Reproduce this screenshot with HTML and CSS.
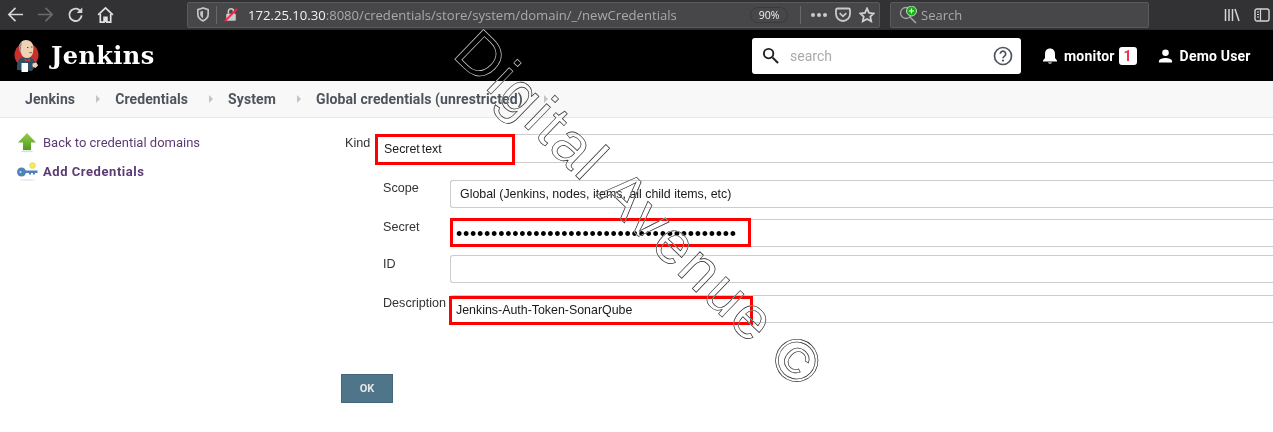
FILE: index.html
```html
<!DOCTYPE html>
<html>

<head>
    <title>Jenkins</title>
    <link rel="stylesheet" href="styles.css">
</head>

<body>
    <!-- browser toolbar -->
    <div class="toolbar">
        <div class="nav-icons">
            <svg class="tb-icon" viewBox="0 0 18 18"><path d="M17 9H2M9 2 2 9l7 7" fill="none" stroke="#d4d4d4" stroke-width="1.800"/></svg>
            <svg class="tb-icon" viewBox="0 0 18 18"><path d="M1 9h15M9 2l7 7-7 7" fill="none" stroke="#6b6b6e" stroke-width="1.800"/></svg>
            <svg class="tb-icon" viewBox="0 0 18 18"><path d="M15.500 10A6.500 6.500 0 1 1 13 4.200L15 6" fill="none" stroke="#d4d4d4" stroke-width="2"/><path d="M16.200 1.500v6h-6z" fill="#d4d4d4"/></svg>
            <svg class="tb-icon" viewBox="0 0 18 18"><path d="M1.200 9.500 9 2l7.800 7.500" fill="none" stroke="#e2e2e2" stroke-width="1.800"/><path d="M3.500 8.500V17h4v-5h3v5h4V8.500" fill="none" stroke="#e2e2e2" stroke-width="1.800"/><rect x="7.500" y="12" width="3" height="5" fill="#e2e2e2"/></svg>
        </div>
        <div class="urlbar">
            <svg class="shield" viewBox="0 0 14 16"><path d="M7 1 1.500 2.800v5c0 3 2.500 5.700 5.500 7 3-1.300 5.500-4 5.500-7v-5z" fill="none" stroke="#c4c4c4" stroke-width="1.800"/><path d="M7 4 4 5v3c0 1.500 1.500 3 3 4z" fill="#c4c4c4"/></svg>
            <span class="url-sep"></span>
            <svg class="lock" viewBox="0 0 16 16"><path d="M5 7V4.500a3 3 0 0 1 6 0V7" fill="none" stroke="#c9c9c9" stroke-width="1.800"/><rect x="2.500" y="7" width="11" height="8" rx="1" fill="#c9c9c9"/><path d="M1 15.500 15 1.500" stroke="#ff1f4b" stroke-width="2"/></svg>
            <span class="url"><span class="url-host">172.25.10.30</span>:8080/credentials/store/system/domain/_/newCredentials</span>
            <span class="zoom-pill">90%</span>
            <span class="url-sep url-sep-right"></span>
            <span class="dots"><i></i><i></i><i></i></span>
            <svg class="pocket" viewBox="0 0 16 16"><path d="M1 3a1.500 1.500 0 0 1 1.500-1.500h11A1.500 1.500 0 0 1 15 3v4A7 7 0 0 1 1 7z" fill="none" stroke="#c9c9c9" stroke-width="1.800"/><path d="m4.700 6.200 3.300 3.100 3.300-3.100" fill="none" stroke="#c9c9c9" stroke-width="1.800"/></svg>
            <svg class="star" viewBox="0 0 16 16"><path d="m8 1.500 2 4.300 4.700.6-3.400 3.200.9 4.700L8 12l-4.200 2.300.9-4.700L1.300 6.400 6 5.800z" fill="none" stroke="#cfcfcf" stroke-width="1.800"/></svg>
        </div>
        <div class="searchbar">
            <svg class="search-glass" viewBox="0 0 20 18"><circle cx="7" cy="7" r="5.500" fill="none" stroke="#a8a8a8" stroke-width="1.300"/><path d="m11 11 6 6" stroke="#a8a8a8" stroke-width="1.500"/><circle cx="12.500" cy="5" r="5" fill="#12b012" stroke="#fff" stroke-width=".7"/><path d="M12.500 2.500v5M10 5h5" stroke="#fff" stroke-width="1.200"/></svg>
            <span>Search</span>
        </div>
        <div class="end-icons">
            <svg class="lib" viewBox="0 0 16 14"><path d="M1.500 1v12M5 1v12M8.500 1v12M11 1l4 12" stroke="#d4d4d4" stroke-width="1.500" fill="none"/></svg>
            <svg class="side" viewBox="0 0 16 14"><rect x="1" y="1" width="14" height="12" rx="2" fill="none" stroke="#d4d4d4" stroke-width="1.400"/><path d="M6.500 1v12M3 4h2M3 6.500h2M3 9h2" stroke="#d4d4d4" stroke-width="1.200"/></svg>
        </div>
    </div>

    <!-- jenkins header -->
    <div class="header">
        <a class="brand">
            <svg class="logo" viewBox="0 0 25 33">
                <circle cx="12.500" cy="16" r="12" fill="#c9302c"/>
                <path d="M3 31c-.5-6 1-11 5-12.500h9c3 1.500 4 5 4.500 8L18 32z" fill="#2f4f66"/>
                <path d="M5 9C5 4 8 1 12 1s7.500 3 7.500 7.500l-.5 5c-.6 3.500-3 5.500-6 5.500s-5-1.700-6-5z" fill="#eed2b1"/>
                <path d="M5 9c0-3 1-5 3-6.500-.5 3-1 5-1 9l-1 1.500C5.300 12 5 10.500 5 9z" fill="#8a8f94"/>
                <path d="M13 8.500h1.500M17 8h1.500M15.500 13.500c1 .5 2 .3 2.500-.3" fill="none" stroke="#4a3a32" stroke-width=".9"/>
                <path d="M10.500 19.500l3 1.500 3-1.500-.5 3-2.500-.8-2.500.8z" fill="#d33833"/>
                <rect x="7.500" y="24" width="6.500" height="9" fill="#ffffff"/>
                <path d="M18.500 24.500l4-1 1.500 3-2.500 2.500-3-1.500z" fill="#eed2b1"/>
            </svg>
            <span class="brand-name">Jenkins</span>
        </a>
        <div class="search-box">
            <svg class="mag" viewBox="0 0 18 18"><circle cx="7" cy="7" r="5" fill="none" stroke="#222" stroke-width="2"/><path d="m11 11 6 6" stroke="#222" stroke-width="2.200"/></svg>
            <span class="search-hint">search</span>
            <svg class="help" viewBox="0 0 20 20"><circle cx="10" cy="10" r="8.500" fill="none" stroke="#4d545d" stroke-width="1.700"/><path d="M7.300 7.800a2.700 2.700 0 1 1 4.200 2.300c-1 .7-1.500 1.200-1.500 2.200" fill="none" stroke="#4d545d" stroke-width="1.700"/><circle cx="10" cy="14.600" r="1.100" fill="#4d545d"/></svg>
        </div>
        <div class="user-links">
            <svg class="bell" viewBox="0 0 16 18"><path d="M8 1.500c-3 0-5 2.200-5 5.500v4L1 13.500v1h14v-1L13 11V7c0-3.300-2-5.500-5-5.500zM6 15.500h4c0 1.500-4 1.500-4 0z" fill="#fff"/></svg>
            <span class="link-text">monitor</span>
            <span class="badge">1</span>
            <svg class="person" viewBox="0 0 16 16"><circle cx="8" cy="4.500" r="3.500" fill="#fff"/><path d="M1 15v-1.500C1 11 5 10 8 10s7 1 7 3.500V15z" fill="#fff"/></svg>
            <span class="link-text">Demo User</span>
        </div>
    </div>

    <!-- breadcrumbs -->
    <div class="breadcrumbs">
        <span class="crumb">Jenkins</span><span class="crumb-arrow"></span>
        <span class="crumb">Credentials</span><span class="crumb-arrow"></span>
        <span class="crumb">System</span><span class="crumb-arrow"></span>
        <span class="crumb">Global credentials (unrestricted)</span><span class="crumb-arrow"></span>
    </div>

    <div class="page">
        <div class="side-panel">
            <a class="task">
                <svg class="task-icon" viewBox="0 0 22 22"><defs><linearGradient id="up" x1="0" y1="0" x2="0" y2="1"><stop offset="0" stop-color="#97cf4c"/><stop offset="1" stop-color="#4e9a1f"/></linearGradient></defs><path d="M11 2 20 11.500h-5V19H7v-7.500H2z" fill="url(#up)"/><ellipse cx="11" cy="20.300" rx="6" ry="1" fill="#dddddd"/></svg>
                <span>Back to credential domains</span>
            </a>
            <a class="task task-current">
                <svg class="task-icon" viewBox="0 0 22 22"><circle cx="16.500" cy="5.500" r="3" fill="#f4ea5b" stroke="#d8cf55" stroke-width=".5"/><circle cx="5.500" cy="12" r="4.500" fill="#4f83bd"/><path d="M8 10.500h13.500v2.500H19v1.500h-2V13h-2v1.500h-2V13H8z" fill="#4f83bd"/><circle cx="4.500" cy="12" r="1" fill="#cfe0f2"/><ellipse cx="11" cy="20" rx="8" ry=".8" fill="#e4e4e4"/></svg>
                <span>Add Credentials</span>
            </a>
        </div>

        <div class="form">
            <div class="row row-kind">
                <label class="kind-label">Kind</label>
                <div class="field field-kind">
                    Secret text
                    <span class="mark mark-kind"></span>
                </div>
            </div>
            <div class="nested">
                <div class="row row-scope">
                    <label>Scope</label>
                    <div class="field">Global (Jenkins, nodes, items, all child items, etc)</div>
                </div>
                <div class="row row-secret">
                    <label>Secret</label>
                    <div class="field field-secret">
                        ••••••••••••••••••••••••••••••••••••••••
                        <span class="mark mark-secret"></span>
                    </div>
                </div>
                <div class="row row-id">
                    <label>ID</label>
                    <div class="field"></div>
                </div>
                <div class="row row-desc">
                    <label>Description</label>
                    <div class="field field-desc">
                        Jenkins-Auth-Token-SonarQube
                        <span class="mark mark-desc"></span>
                    </div>
                </div>
            </div>
            <button class="ok-btn">OK</button>
        </div>
    </div>

    <div class="watermark">Digital Avenue ©</div>
</body>

</html>
```

FILE: styles.css
```css
html,
body {
    margin: 0;
    height: 432px;
    overflow: hidden;
    background: #ffffff;
}

body {
    position: relative;
    width: 1273px;
    font-family: 'Liberation Sans', sans-serif;
    font-size: 12.6px;
    color: #333333;
}

/* browser toolbar */
.toolbar {
    display: flex;
    align-items: center;
    height: 30px;
    background: #323234;
    box-sizing: border-box;
    border-bottom: 1px solid #2a2a2c;
    font-family: 'Open Sans', sans-serif;
}

.nav-icons {
    display: flex;
    align-items: center;
    gap: 13px;
    width: 187px;
    box-sizing: border-box;
    padding-left: 7px;
}

.tb-icon {
    width: 17px;
    height: 17px;
}

.urlbar {
    display: flex;
    align-items: center;
    width: 693px;
    height: 26px;
    box-sizing: border-box;
    background: #474749;
    border: 1px solid #5a5a5c;
    border-radius: 2px;
    padding-left: 8px;
}

.shield {
    width: 14px;
    height: 15px;
}

.url-sep {
    width: 1px;
    height: 18px;
    background: #69696b;
    margin: 0 7px 0 6px;
}

.lock {
    width: 14px;
    height: 15px;
    margin-right: 10px;
}

.url {
    width: 502px;
    font-size: 13.1px;
    color: #a9a9ab;
    white-space: nowrap;
}

.url-host {
    color: #f2f2f2;
}

.zoom-pill {
    width: 38px;
    height: 16px;
    line-height: 15px;
    box-sizing: border-box;
    border: 1px solid #3a3a3c;
    border-radius: 8px;
    color: #f2f2f2;
    font-size: 10.5px;
    text-align: center;
}

.url-sep-right {
    margin: 0 10px 0 12px;
}

.dots {
    display: flex;
    gap: 2px;
    margin-right: 8px;
}

.dots i {
    width: 4px;
    height: 4px;
    border-radius: 50%;
    background: #c9c9c9;
}

.pocket {
    width: 16px;
    height: 16px;
    margin-right: 8px;
}

.star {
    width: 16px;
    height: 16px;
}

.searchbar {
    display: flex;
    align-items: center;
    gap: 2px;
    width: 259px;
    height: 26px;
    margin-left: 10px;
    padding-left: 8px;
    box-sizing: border-box;
    background: #474749;
    border: 1px solid #5a5a5c;
    border-radius: 2px;
    color: #a9a9ab;
    font-size: 13px;
}

.search-glass {
    width: 20px;
    height: 18px;
}

.end-icons {
    display: flex;
    align-items: center;
    gap: 14px;
    margin-left: 75px;
}

.lib,
.side {
    width: 16px;
    height: 14px;
}

/* jenkins header */
.header {
    display: flex;
    align-items: center;
    height: 51px;
    background: #000000;
    color: #ffffff;
}

.brand {
    display: flex;
    align-items: center;
    width: 752px;
    box-sizing: border-box;
    padding-left: 14px;
}

.logo {
    width: 25px;
    height: 33px;
    margin-right: 12px;
}

.brand-name {
    font-family: 'DejaVu Serif', serif;
    font-weight: bold;
    font-size: 24px;
    letter-spacing: .4px;
}

.search-box {
    display: flex;
    align-items: center;
    width: 269px;
    height: 36px;
    box-sizing: border-box;
    padding: 0 8px 0 10px;
    background: #ffffff;
    border-radius: 3px;
}

.mag {
    width: 17px;
    height: 17px;
}

.search-hint {
    flex: 1;
    margin-left: 11px;
    color: #aaaaaa;
    font-family: Roboto, sans-serif;
    font-size: 14px;
}

.help {
    width: 20px;
    height: 20px;
}

.user-links {
    display: flex;
    align-items: center;
    margin-left: 21px;
    font-family: Roboto, sans-serif;
    font-size: 14px;
    font-weight: bold;
    letter-spacing: .2px;
}

.bell {
    width: 16px;
    height: 18px;
    margin-right: 6px;
}

.badge {
    width: 18px;
    height: 18px;
    line-height: 18px;
    margin: 0 21px 0 4px;
    border-radius: 3px;
    background: #ffffff;
    color: #e9314f;
    text-align: center;
    font-size: 14px;
}

.person {
    width: 15px;
    height: 16px;
    margin-right: 7px;
}

/* breadcrumbs */
.breadcrumbs {
    display: flex;
    align-items: center;
    height: 37px;
    box-sizing: border-box;
    padding-left: 25px;
    background: #f8f8f8;
    border-bottom: 1px solid #e9e9e9;
    font-family: Roboto, sans-serif;
    font-size: 14px;
    font-weight: bold;
    letter-spacing: .1px;
    color: #4d545d;
}

.crumb-arrow {
    width: 0;
    height: 0;
    margin: 0 15px 0 21px;
    border-left: 4px solid #c4c4c4;
    border-top: 4px solid transparent;
    border-bottom: 4px solid transparent;
}

/* page body */
.page {
    display: flex;
}

.side-panel {
    width: 341px;
    box-sizing: border-box;
    padding: 13px 0 0 16px;
    font-family: Roboto, sans-serif;
    font-size: 13px;
    color: #5c3b74;
}

.task {
    display: flex;
    align-items: center;
    gap: 5px;
    height: 22px;
    margin-bottom: 7px;
}

.task-current {
    font-weight: bold;
    letter-spacing: .55px;
}

.task-icon {
    width: 22px;
    height: 22px;
}

.form {
    flex: 1;
    min-width: 0;
    padding-top: 16px;
}

.row {
    display: flex;
    position: relative;
}

.row label {
    display: block;
    padding-top: 1px;
    color: #333333;
}

.row-kind label {
    width: 34px;
    padding-left: 4px;
    box-sizing: border-box;
    padding-top: 2px;
}

.nested {
    padding: 17px 0 0 42px;
}

.nested label {
    width: 67px;
}

.row-scope,
.row-secret {
    margin-bottom: 8px;
}

.row-id {
    margin-bottom: 12px;
}

.row-scope {
    margin-bottom: 11px;
}

.row-id label {
    padding-top: 2px;
}

.field {
    position: relative;
    flex: 1;
    display: flex;
    align-items: center;
    height: 28px;
    box-sizing: border-box;
    padding-left: 9px;
    border: 1px solid #cccccc;
    border-right: 0;
    border-radius: 3px 0 0 3px;
    font-size: 12.4px;
    color: #1a1a1a;
    white-space: nowrap;
}

.field-kind {
    height: 29px;
    border-left: 0;
    word-spacing: -1.5px;
}

.field-secret {
    padding: 2px 0 0 5px;
    font-size: 18px;
    letter-spacing: .72px;
    color: #000000;
}

.field-desc {
    padding: 2px 0 0 5px;
}

/* red marker boxes drawn on top of the form */
.mark {
    position: absolute;
    box-sizing: border-box;
    border: 3px solid #ff0000;
}

.mark-kind {
    top: -1px;
    left: 0;
    width: 140px;
    height: 31px;
}

.mark-secret {
    top: -2px;
    left: -1px;
    width: 301px;
    height: 29px;
}

.mark-desc {
    top: 0;
    left: -2px;
    width: 304px;
    height: 29px;
}

.ok-btn {
    display: block;
    width: 52px;
    height: 29px;
    margin-top: 51px;
    padding: 0;
    border: 1px solid #44697d;
    background: #4f758b;
    color: #e6e6e6;
    font-family: Roboto, sans-serif;
    font-size: 11px;
    font-weight: bold;
}

/* watermark over everything */
.watermark {
    position: absolute;
    left: 452px;
    top: 0;
    transform-origin: 0 55px;
    transform: rotate(44deg);
    height: 72px;
    line-height: 72px;
    font-family: 'Liberation Sans', sans-serif;
    font-size: 60px;
    letter-spacing: 2.6px;
    white-space: nowrap;
    color: transparent;
    -webkit-text-stroke: .6px #ffffff;
    mix-blend-mode: difference;
    opacity: .85;
    pointer-events: none;
}
```
